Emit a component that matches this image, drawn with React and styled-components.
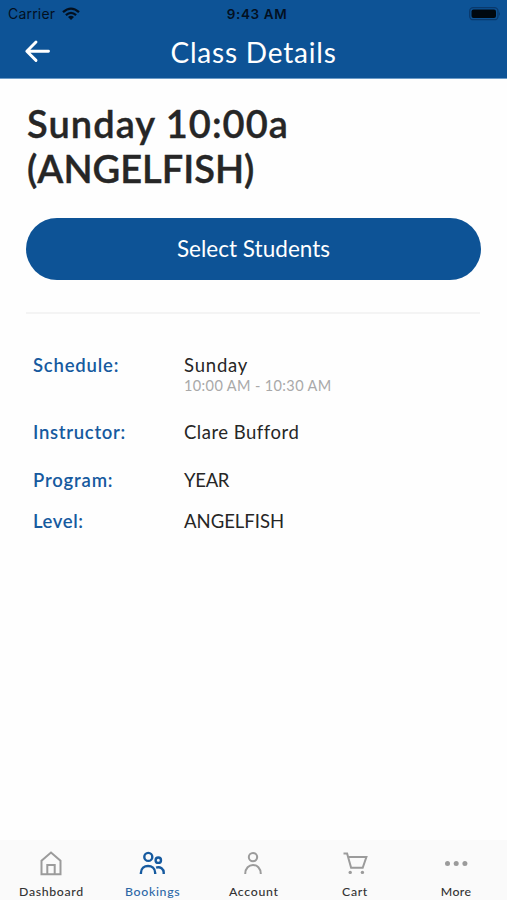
import React from "react";
import styled, { createGlobalStyle } from "styled-components";

const GlobalStyle = createGlobalStyle`
  * { box-sizing: border-box; }
  body { margin: 0; background: #fefefe; font-family: Lato, "Noto Sans", sans-serif; }
`;
const Screen = styled.div`
  height: 900px;
  display: flex;
  flex-direction: column;
  color: #262626;
  white-space: nowrap;
  overflow: hidden;
`;
const Header = styled.header`
  height: 79px;
  background: #0d5396;
  border-bottom: 1px solid #6c9bc7;
`;
const StatusBar = styled.div`
  height: 27px;
  display: grid;
  grid-template-columns: 1fr auto 1fr;
  align-items: center;
  padding: 0 6px 0 8px;
  color: #03101f;
  font-family: Inter, sans-serif;
`;
const Carrier = styled.div`
  display: flex;
  align-items: center;
  gap: 7px;
  font-size: 14px;
  letter-spacing: 0.2px;
`;
const Clock = styled.div`
  font-size: 13.5px;
  font-weight: 600;
  letter-spacing: 0.6px;
  padding-left: 5px;
`;
const Battery = styled.svg`
  justify-self: end;
`;
const NavBar = styled.div`
  height: 51px;
  display: grid;
  grid-template-columns: 60px 1fr 60px;
  align-items: center;
`;
const BackButton = styled.button`
  border: 0;
  background: none;
  padding: 0 0 3px 24px;
  display: flex;
`;
const NavTitle = styled.h2`
  margin: -2px 0 0;
  text-align: center;
  color: #fff;
  font-size: 28px;
  font-weight: 400;
  line-height: 50px;
  letter-spacing: ${(p) => p.$spacing}px;
`;
const Content = styled.main`
  flex: 1;
  padding: 22px 26px 0;
`;
const ClassTitle = styled.h1`
  margin: 0;
  padding-left: 1px;
  font-size: 38px;
  line-height: 45px;
  font-weight: 600;
  -webkit-text-stroke: 0.4px currentColor;
`;
const TitleLine = styled.span`
  display: block;
  letter-spacing: ${(p) => p.$spacing}px;
`;
const PrimaryButton = styled.button`
  display: block;
  width: 455px;
  height: 62px;
  margin-top: 27px;
  padding: 0 0 2px;
  border: 0;
  border-radius: 31px;
  background: #0d5396;
  color: #fff;
  font: 400 22.5px Lato, sans-serif;
  letter-spacing: 0.03px;
`;
const Divider = styled.hr`
  width: 454px;
  height: 2px;
  margin: 32px 0 40px;
  border: 0;
  background: #f4f4f4;
`;
const Details = styled.dl`
  margin: 0;
  padding-left: 7px;
`;
const DetailRow = styled.div`
  display: grid;
  grid-template-columns: 151px 1fr;
  height: ${(p) => p.$height}px;
  font-size: 18.5px;
  line-height: 22px;
`;
const Label = styled.dt`
  color: #165a9f;
  font-weight: 600;
  letter-spacing: ${(p) => p.$spacing}px;
`;
const Value = styled.dd`
  margin: 0;
  letter-spacing: ${(p) => p.$spacing}px;
`;
const Time = styled.div`
  color: #a9a9a9;
  font-size: 14.5px;
  line-height: 20px;
  letter-spacing: 0.38px;
`;
const TabBar = styled.nav`
  height: 60px;
  display: grid;
  grid-template-columns: repeat(5, 101.2px);
  background: #fafafa;
`;
const Tab = styled.div`
  display: flex;
  flex-direction: column;
  align-items: center;
  padding: 9px 0 0 1px;
  color: ${(p) => (p.$active ? "#165a9f" : "#9b9b9b")};
`;
const TabLabel = styled.span`
  margin-top: 7px;
  color: ${(p) => (p.$active ? "#2c67a6" : "#333")};
  font-size: 12.3px;
  font-weight: 500;
  line-height: 16px;
  letter-spacing: ${(p) => p.$spacing}px;
  margin-right: -${(p) => p.$spacing}px;
`;

const icons = {
  home: <path d="M4.500 25.200V11.800L14 3.500l9.500 8.300V25.200Z M10.300 25.200v-9.200h7.400v9.200" />,
  people: (
    <g strokeWidth="2.400">
      <circle cx="10.300" cy="7.900" r="4" />
      <circle cx="20.300" cy="11.200" r="2.700" />
      <path d="M2.900 25v-1c0-9.400 14.300-9.400 14.300 0v1 M18.100 18.600c4.400-1.400 7.600 1.500 7.600 5v1.300" />
    </g>
  ),
  person: (
    <g>
      <circle cx="14" cy="8.100" r="4.200" />
      <path d="M6.200 25c0-12 15.600-12 15.600 0" />
    </g>
  ),
  cart: (
    <g>
      <path d="M2.500 4.500h3.600l4 14.300h11.600l3.700-10.800H7.200" />
      <circle cx="9.200" cy="23.400" r="1.700" fill="currentColor" stroke="none" />
      <circle cx="21.400" cy="23.400" r="1.700" fill="currentColor" stroke="none" />
    </g>
  ),
  more: (
    <g fill="currentColor" stroke="none">
      <circle cx="5.500" cy="14.500" r="2.500" />
      <circle cx="14.200" cy="14.500" r="2.500" />
      <circle cx="22.900" cy="14.500" r="2.500" />
    </g>
  ),
};
const tabs = [
  { label: "Dashboard", icon: "home", spacing: 0.65 },
  { label: "Bookings", icon: "people", spacing: 0.7, active: true },
  { label: "Account", icon: "person", spacing: 0.7 },
  { label: "Cart", icon: "cart", spacing: 0.6 },
  { label: "More", icon: "more", spacing: 0.4 },
];
const details = [
  { label: "Schedule:", value: "Sunday", time: "10:00 AM - 10:30 AM", height: 67, ls: 0.8, vs: 0.8 },
  { label: "Instructor:", value: "Clare Bufford", height: 48, ls: 0.7, vs: 0.5 },
  { label: "Program:", value: "YEAR", height: 41, ls: 0.8, vs: -0.3 },
  { label: "Level:", value: "ANGELFISH", height: 41, ls: 0.6, vs: 0 },
];

export default function App() {
  return (
    <Screen>
      <GlobalStyle />
      <Header>
        <StatusBar>
          <Carrier>
            <span>Carrier</span>
            <svg width="18" height="14" viewBox="0 0 18 14" fill="none" stroke="currentColor" strokeWidth="2.300">
              <path d="M1 5.200Q9-2 17 5.200M3.900 8.100Q9 3.600 14.100 8.100" />
              <path d="M6 10.100Q9 7.500 12 10.100L9 13Z" fill="currentColor" stroke="none" />
            </svg>
          </Carrier>
          <Clock>9:43 AM</Clock>
          <Battery width="32" height="14" viewBox="0 0 32 14">
            <rect x="0.700" y="0.700" width="28.300" height="12" rx="3.500" fill="none" stroke="#0a396c" strokeWidth="1.300" />
            <rect x="2.500" y="2.400" width="24.500" height="8.600" rx="2" fill="#000810" />
            <path d="M30 4.500q1.800 2.200 0 4.400Z" fill="#0a396c" />
          </Battery>
        </StatusBar>
        <NavBar>
          <BackButton aria-label="Back">
            <svg width="28" height="24" viewBox="0 0 28 24" fill="none" stroke="#fff" strokeWidth="2.900" strokeLinecap="round" strokeLinejoin="round">
              <path d="M12 3L2.800 12.200l9.200 9.200M3 12.200h21.500" />
            </svg>
          </BackButton>
          <NavTitle $spacing={0.8}>Class Details</NavTitle>
        </NavBar>
      </Header>
      <Content>
        <ClassTitle>
          <TitleLine $spacing={1.05}>Sunday 10:00a</TitleLine>
          <TitleLine $spacing={0}>(ANGELFISH)</TitleLine>
        </ClassTitle>
        <PrimaryButton>Select Students</PrimaryButton>
        <Divider />
        <Details>
          {details.map((d) => (
            <DetailRow key={d.label} $height={d.height}>
              <Label $spacing={d.ls}>{d.label}</Label>
              <Value $spacing={d.vs}>
                {d.value}
                {d.time && <Time>{d.time}</Time>}
              </Value>
            </DetailRow>
          ))}
        </Details>
      </Content>
      <TabBar>
        {tabs.map((t) => (
          <Tab key={t.label} $active={t.active}>
            <svg width="28" height="28" viewBox="0 0 28 28" fill="none" stroke="currentColor" strokeWidth="2">
              {icons[t.icon]}
            </svg>
            <TabLabel $active={t.active} $spacing={t.spacing}>{t.label}</TabLabel>
          </Tab>
        ))}
      </TabBar>
    </Screen>
  );
}
